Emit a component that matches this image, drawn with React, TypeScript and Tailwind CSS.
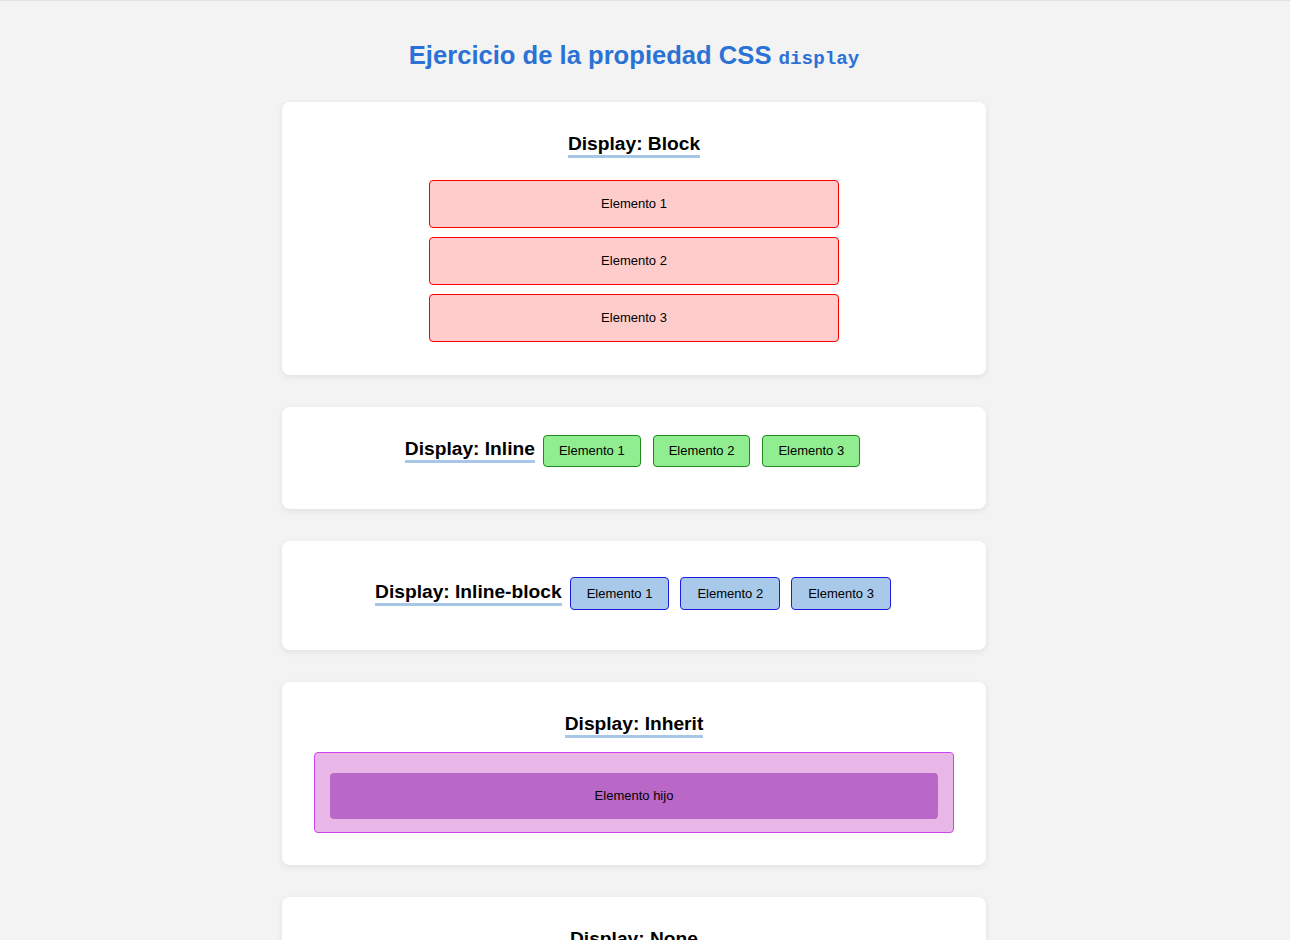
const font = { fontFamily: '"Liberation Sans", Arial, sans-serif' };

function Heading({ children }: { children: React.ReactNode }) {
	return (
		<h2 className="inline-block border-b-[3px] border-[#a8c7e6] text-[19.2px] leading-[22px] font-bold text-black">
			{children}
		</h2>
	);
}

function Card({ className, children }: { className?: string; children: React.ReactNode }) {
	return (
		<section
			className={
				"w-[704px] rounded-lg bg-white px-8 shadow-[0_2px_6px_rgba(0,0,0,0.08)] " + (className ?? "")
			}
		>
			{children}
		</section>
	);
}

export default function App() {
	const items = ["Elemento 1", "Elemento 2", "Elemento 3"];
	return (
		<div className="min-h-[940px] border-t border-[#dde2e8] bg-[#f3f3f3] pr-[22px]" style={font}>
			<div className="flex flex-col items-center">
				<h1 className="mt-[40px] text-[25.6px] leading-[29px] font-bold text-[#2b72d6]">
					Ejercicio de la propiedad CSS{" "}
					<code className="text-[19.2px] font-bold" style={{ fontFamily: '"Liberation Mono", monospace' }}>
						display
					</code>
				</h1>

				<div className="mt-[28px] flex flex-col gap-8">
					{/* block */}
					<Card className="pt-[31px] pb-[33px]">
						<div className="flex flex-col items-center">
							<Heading>Display: Block</Heading>
							<div className="mt-[22px] flex flex-col gap-[9px]">
								{items.map((t) => (
									<div
										key={t}
										className="flex h-[48px] w-[410px] items-center justify-center rounded border border-[#ff0000] bg-[#ffcccc] text-[13px] text-black"
									>
										{t}
									</div>
								))}
							</div>
						</div>
					</Card>

					{/* inline */}
					<Card className="pt-[28px] pb-[42px]">
						<div className="flex items-baseline justify-center pr-[3px]">
							<Heading>Display: Inline</Heading>
							<div className="ml-2 flex items-baseline gap-[12px]">
								{items.map((t) => (
									<span
										key={t}
										className="rounded border border-[#1e8a1e] bg-[#90ee90] px-[15px] py-[7px] text-[13px] leading-[16px] text-black"
									>
										{t}
									</span>
								))}
							</div>
						</div>
					</Card>

					{/* inline-block */}
					<Card className="pt-[36px] pb-[40px]">
						<div className="flex items-baseline justify-center pr-[2px]">
							<Heading>Display: Inline-block</Heading>
							<div className="ml-2 flex items-baseline gap-[11px]">
								{items.map((t) => (
									<span
										key={t}
										className="inline-block rounded border border-[#1c1ce0] bg-[#a9c9ea] px-4 py-[8px] text-[13px] leading-[15px] text-black"
									>
										{t}
									</span>
								))}
							</div>
						</div>
					</Card>

					{/* inherit */}
					<Card className="pt-[31px] pb-[32px]">
						<div className="flex flex-col items-center">
							<Heading>Display: Inherit</Heading>
							<div className="mt-[14px] w-full rounded border border-[#cc44ee] bg-[#e8b7e8] px-[15px] pt-[20px] pb-[13px]">
								<div className="flex h-[46px] items-center justify-center rounded bg-[#ba68c8] text-[13px] text-black">
									Elemento hijo
								</div>
							</div>
						</div>
					</Card>

					{/* none */}
					<Card className="pt-[31px] pb-[33px]">
						<div className="flex flex-col items-center">
							<Heading>Display: None</Heading>
							<p className="mt-4 text-[13px] text-gray-500">Este elemento está oculto.</p>
						</div>
					</Card>
				</div>
				<div className="h-8" />
			</div>
		</div>
	);
}
